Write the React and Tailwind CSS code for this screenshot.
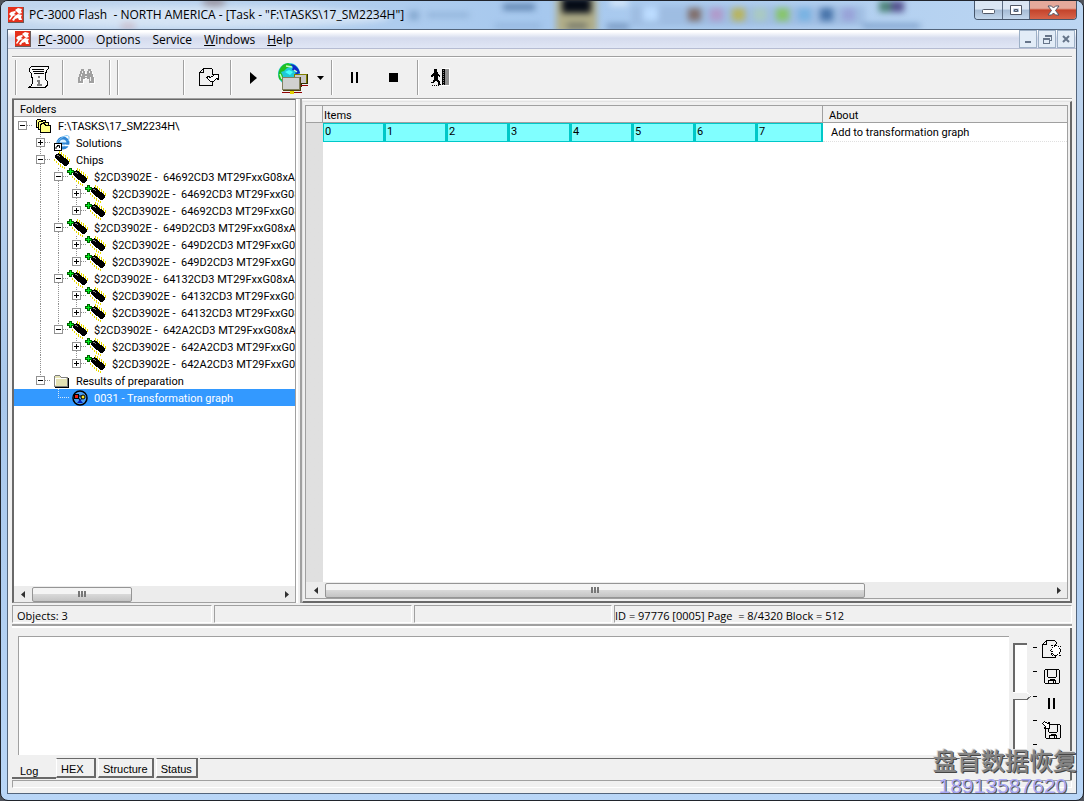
import { useState } from 'react'

const CHIPS = ['64692CD3', '649D2CD3', '64132CD3', '642A2CD3']

// guides: one entry for each indent column, from left to right
const ROWS = [
  { guides: ['minus-root'], icon: 'stack', label: 'F:\\TASKS\\17_SM2234H\\' },
  { guides: ['none', 'plus'], icon: 'ie', label: 'Solutions' },
  { guides: ['none', 'minus'], icon: 'chip', label: 'Chips' },
  ...CHIPS.flatMap((chip, i) => {
    const last = i === CHIPS.length - 1
    const parent = last ? 'none' : 'line'
    const label = `$2CD3902E -  ${chip} MT29FxxG08`
    return [
      { guides: ['none', 'line', last ? 'minus-last' : 'minus'], icon: 'chipAdd', label: `${label}xA` },
      { guides: ['none', 'line', parent, 'plus'], icon: 'chipAdd', label },
      { guides: ['none', 'line', parent, 'plus-last'], icon: 'chipAdd', label },
    ]
  }),
  { guides: ['none', 'minus-last'], icon: 'folder', label: 'Results of preparation' },
  { guides: ['none', 'none', 'corner'], icon: 'graph', label: '0031 - Transformation graph' },
]

const MENU = ['PC-3000', 'Options', 'Service', 'Windows', 'Help']
const UNDERLINED = ['PC-3000', 'Windows', 'Help']
const ITEMS = [0, 1, 2, 3, 4, 5, 6, 7]
const TABS = ['Log', 'HEX', 'Structure', 'Status']

function AppLogo() {
  return (
    <svg width="16" height="16" viewBox="0 0 16 16" className="shrink-0">
      <rect width="16" height="16" fill="#6b5a58" />
      <rect width="15" height="15" fill="#e5301c" />
      <path d="M1 7L3 5L7 4L8 5L6 7L8 8L5 9L2 13L1 12L3 9ZM7 3L10 1L14 2L13 4L14 6L11 7L9 5ZM7 9L10 7L14 8L13 10L14 13H11L10 11L7 12L6 14L4 13Z" fill="#fff" />
    </svg>
  )
}

function Guide({ type }) {
  const [kind, mod] = type.split('-')
  const box = kind === 'plus' || kind === 'minus'
  const drawing = (
    <svg width="18" height="17" viewBox="0 0 18 17" shapeRendering="crispEdges" className="block overflow-visible">
      <g stroke="#909090" strokeDasharray="1 1" fill="none">
        {kind === 'line' && <path d="M8.500 0V17" />}
        {box && mod !== 'root' && <path d="M8.500 0V4" />}
        {box && !mod && <path d="M8.500 13V17" />}
        {box && <path d="M13 8.500H19" />}
        {kind === 'corner' && <path d="M8.500 0V8.500H19" stroke="#d8e8f8" />}
      </g>
      {box && <rect x="4.500" y="4.500" width="8" height="8" fill="#fff" stroke="#919191" />}
      {box && <path d="M6 8.500H11" stroke="#000" />}
      {kind === 'plus' && <path d="M8.500 6V11" stroke="#000" />}
    </svg>
  )
  if (box) {
    return <button type="button" aria-label={kind === 'plus' ? 'Expand' : 'Collapse'} className="shrink-0">{drawing}</button>
  }
  return <span className="shrink-0">{drawing}</span>
}

function Chip() {
  return (
    <g shapeRendering="crispEdges">
      <path d="M0 7h1v2H0ZM2 9h1v2H2ZM4 11h1v2H4ZM6 12h1v3H6ZM8 14h1v2H8ZM10 15h1v2h-1ZM5 -1h1v3H5ZM7 0h1v3H7ZM9 2h1v3H9ZM11 3h1v3h-1ZM13 5h1v3h-1ZM15 7h1v3h-1Z" fill="#e8dc00" />
      <path d="M1 3h1v-1h2v-1h1v1h2v1h1v1h1v1h1v1h2v1h1v1h1v1h1v3h-1v1h-1v1h-3v-1H9v-1H8v-1H6v-1H5V9H4V8H3V7H2V6H1Z" fill="#000" />
      <path d="M3 3h2v1H3ZM5 4h1v1H5Z" fill="#808080" />
    </g>
  )
}

function TreeIcon({ name }) {
  return (
    <svg width="16" height="16" viewBox="0 0 16 16" className="block shrink-0 overflow-visible">
      {name === 'stack' && (
        <g fill="#ffff80" stroke="#000" shapeRendering="crispEdges">
          <path d="M.5 9.5V2.5L1.5 1.5H4.5L5.5 2.5H9.5V9.5Z" />
          <path d="M2.5 11.5V4.5L3.5 3.5H6.5L7.5 4.5H12.5V11.5Z" />
          <path d="M4.5 14.5V7.5L5.5 5.5H8.5L9.5 7.5H14.5V14.5Z" />
        </g>
      )}
      {name === 'ie' && (
        <g>
          <circle cx="9" cy="8" r="5" fill="#d8f0ff" stroke="#2f86d6" strokeWidth="3" />
          <path d="M5 8.500H14" stroke="#2f86d6" strokeWidth="2" />
          <path d="M11 10.500H15" stroke="#fff" strokeWidth="1.500" />
          <path d="M2 10C4 4 12 -1 14.500 1C15.500 2 15 4 14 6" stroke="#7cc4f4" fill="none" />
          <rect x=".5" y="8.500" width="7" height="7" fill="#fff" stroke="#000" />
          <path d="M2 14V12L4.500 11M3 10.500H5.500V13" stroke="#000" fill="none" />
        </g>
      )}
      {name === 'chip' && <Chip />}
      {name === 'chipAdd' && (
        <g>
          <Chip />
          <path d="M-5 2.500H2M-1.500 -1V6" stroke="#006000" strokeWidth="3" />
          <path d="M-4 2.500H1M-1.500 0V5" stroke="#00f020" strokeWidth="1" />
        </g>
      )}
      {name === 'folder' && (
        <g shapeRendering="crispEdges">
          <path d="M1 14.500H14.500V5" stroke="#000" fill="none" />
          <path d="M.5 13.500V3.500L1.500 2.500H5.500L7.500 4.500H13.500V13.500Z" fill="#e4e2b4" stroke="#808080" />
          <path d="M1.500 12V5.500H12" stroke="#fff" fill="none" />
        </g>
      )}
      {name === 'graph' && (
        <g>
          <circle cx="8" cy="8" r="7" fill="#4a9df0" stroke="#000" strokeWidth="1.500" />
          <path d="M6 6H11L8 11Z" fill="none" stroke="#000" />
          <rect x="2.500" y="4.500" width="4" height="4" fill="#f02010" stroke="#000" />
          <circle cx="11" cy="7" r="2" fill="#ffe820" stroke="#000" />
          <path d="M5 13L8 9.500L11 13Z" fill="#0020c0" />
        </g>
      )}
    </svg>
  )
}

function FolderTree() {
  const [selected, setSelected] = useState(ROWS.length - 1)

  return (
    <section className="flex w-[284px] shrink-0 flex-col border border-l-2 border-[#696969] border-r-[#a0a0a0] border-b-[#a0a0a0] bg-white text-[11px]">
      <h2 className="h-[17px] border-b border-[#a0a0a0] bg-[#f0f0f0] pl-1.5 leading-5">Folders</h2>
      <ul className="flex-1 overflow-hidden">
        {ROWS.map((row, i) => (
          <li key={i} className={`flex h-[17px] items-center ${i === selected ? 'bg-[#3399ff] text-white' : ''}`}>
            {row.guides.map((g, n) => <Guide key={n} type={g} />)}
            <button type="button" onClick={() => setSelected(i)} className="ml-1 flex h-[17px] items-center gap-1.5 whitespace-pre">
              <TreeIcon name={row.icon} />
              <span className="pt-0.5 leading-4">{row.label}</span>
            </button>
          </li>
        ))}
      </ul>
      <ScrollBar left="w-[18px]" thumb="w-[100px]" />
    </section>
  )
}

function ScrollBar({ left, thumb }) {
  return (
    <div className="flex h-4 shrink-0 items-center bg-[#ececec]">
      <button type="button" aria-label="Scroll left" className={`flex ${left} justify-center`}>
        <svg width="4" height="7" viewBox="0 0 4 7"><path d="M4 0V7L0 3.500Z" fill="#303030" /></svg>
      </button>
      <div className={`${thumb} flex h-[15px] items-center justify-center gap-px rounded-xs border border-[#959595] bg-linear-to-b from-[#f4f4f4] from-45% via-[#d8d8d8] via-50% to-[#c4c4c4]`}>
        <span className="h-1.5 w-0.5 bg-[#777]" />
        <span className="h-1.5 w-0.5 bg-[#777]" />
        <span className="h-1.5 w-0.5 bg-[#777]" />
      </div>
      <button type="button" aria-label="Scroll right" className="ml-auto flex w-4 justify-center">
        <svg width="4" height="7" viewBox="0 0 4 7"><path d="M0 0V7L4 3.500Z" fill="#303030" /></svg>
      </button>
    </div>
  )
}

function ItemGrid() {
  return (
    <section className="mt-0.5 flex min-w-0 flex-1 flex-col border-r-2 border-b-2 border-l border-t border-[#696969] border-l-[#e3e3e3] border-t-[#e3e3e3] bg-[#f0f0f0] px-0.5 pt-[3px] pb-0.5">
      <div className="flex flex-1 flex-col border border-[#a0a0a0] bg-white text-[11px]">
        <div className="flex flex-1 flex-col bg-linear-to-r from-[#e0e0e0] from-[17px] to-white to-[17px]">
          <table className="w-full table-fixed border-separate border-spacing-0">
            <colgroup>
              <col className="w-[17px]" />
              {ITEMS.map(n => <col key={n} className={n === 7 ? 'w-[66px]' : 'w-[62px]'} />)}
              <col />
            </colgroup>
            <thead>
              <tr className="bg-[#f0f0f0] text-left leading-4">
                <th className="border-r border-b border-[#a0a0a0] p-0"></th>
                <th colSpan="8" className="border-r border-b border-[#a0a0a0] p-0 pl-px font-normal">
                  <div className="h-4 leading-5">Items</div>
                </th>
                <th className="border-b border-[#a0a0a0] p-0 pl-1.5 font-normal">
                  <div className="h-4 leading-5">About</div>
                </th>
              </tr>
            </thead>
            <tbody>
              <tr className="h-[19px] leading-4">
                <td className="bg-[#e0e0e0] p-0"></td>
                {ITEMS.map(n => (
                  <td key={n} className="p-0 align-top">
                    <div className="h-[19px] border border-r-2 border-[#00c8c8] bg-[#80ffff] pl-px">{n}</div>
                  </td>
                ))}
                <td className="border-b border-dotted border-[#e0e0e0] bg-white p-0 pt-0.5 pl-2">Add to transformation graph</td>
              </tr>
            </tbody>
          </table>
        </div>
        <ScrollBar left="w-[19px]" thumb="w-[540px]" />
      </div>
    </section>
  )
}

function Separator({ className }) {
  return <span className={`h-[35px] w-0.5 shrink-0 border-l border-[#a0a0a0] bg-white ${className}`} />
}

function Toolbar() {
  return (
    <div className="mx-1 mt-[7px] flex h-[43px] items-center border-y border-[#a0a0a0] pl-[3px] shadow-[inset_0_1px_#fff,0_1px_#fff]">
      <Separator className="" />
      <button type="button" aria-label="Script" className="flex w-[45px] justify-center pr-0.5">
        <svg width="22" height="23" viewBox="0 0 22 23" shapeRendering="crispEdges" fill="none" stroke="#000">
          <path d="M20.500 .5H3.500L1.500 2.500V5.500L3.500 7.500V10.500L4.500 12.500V16.500L3.500 19.500L.5 21.500H16.500L18.500 20.500L19.500 18.500V15.500L17.500 13.500V8.500L18.500 4.500L20.500 2.500Z" fill="#f8f8f8" />
          <path d="M4 3.500H16M5 5.500H16M6 7.500H16" />
          <path d="M10 11H12M9 14.500H11M9 18.500H14" stroke="#808080" strokeWidth="2" />
          <path d="M11 14V19" stroke="#808080" strokeWidth="2" />
        </svg>
      </button>
      <Separator className="" />
      <button type="button" aria-label="Find" disabled className="flex w-[45px] justify-center">
        <svg width="17" height="17" viewBox="0 0 17 17" shapeRendering="crispEdges">
          <path d="M3 0h3v2h1v3h2V2h1V0h3v2h1v3h1v3h1v6h-5v-4H9V9H7v1H5v4H0V8h1V5h1V2h1Z" fill="#fff" transform="translate(1 1)" />
          <path d="M3 0h3v2h1v3h2V2h1V0h3v2h1v3h1v3h1v6h-5v-4H9V9H7v1H5v4H0V8h1V5h1V2h1Z" fill="#a0a0a0" />
          <path d="M4.500 2v2M11.500 2v2M2.500 8v4M12.500 8v4M3.500 5v2M7 7.500h2" stroke="#f0f0f0" />
        </svg>
      </button>
      <Separator className="" />
      <Separator className="ml-[6px]" />
      <Separator className="ml-[64px]" />
      <button type="button" aria-label="Export" className="flex w-[45px] justify-center pl-1">
        <svg width="21" height="19" viewBox="0 0 21 19" shapeRendering="crispEdges" fill="none" stroke="#000">
          <path d="M13.500 13V17.500H.5V4.500L4.500 .5H12.500L13.500 1.500V6M4.500 .5V4.500H.5" />
          <path d="M11.500 13.500L7.500 9.500L9.500 8.500L11.500 9.500L14.500 7.500L13.500 6.500H19.500V11.500L17.500 10.500L14.500 13.500Z" fill="#fff" />
        </svg>
      </button>
      <Separator className="" />
      <button type="button" aria-label="Start" className="flex w-[43px] justify-center">
        <svg width="7" height="12" viewBox="0 0 7 12"><path d="M0 0L7 6L0 12Z" /></svg>
      </button>
      <button type="button" aria-label="Network" className="flex w-9 justify-center">
        <svg width="32" height="32" viewBox="0 0 32 32">
          <circle cx="12" cy="12" r="11" fill="#20c8d8" />
          <path d="M2 17C0 9 4 2 11 1L16 4L10 6L7 9L4 10L6 14L5 19Z" fill="#20c020" />
          <path d="M8 10L12 8L16 10L13 13Z" fill="#40ffff" />
          <path d="M13 2C18 2 22 6 23 11L18 13L19 9L15 8L16 5Z" fill="#1028c8" />
          <path d="M9 4L15 5M3 12L5 17M17 8L20 10" stroke="#c0ffc0" strokeWidth="1.500" />
          <g shapeRendering="crispEdges">
            <rect x="17.500" y="12.500" width="12" height="9" fill="#c8c8c8" stroke="#808000" />
            <path d="M17 21.500H30V12M24 22V24.500" stroke="#303000" fill="none" />
            <path d="M24 23.500H31" stroke="#900000" strokeWidth="1" />
            <rect x="5.500" y="15.500" width="17" height="12" fill="#d0d0d0" stroke="#808060" />
            <path d="M6 28.500H23.500V15M14.500 29V31" stroke="#504010" fill="none" />
            <path d="M5 30.500H25" stroke="#900000" strokeWidth="1" />
            <rect x="13" y="29" width="4" height="3" fill="#e0d000" />
          </g>
        </svg>
      </button>
      <button type="button" aria-label="Network options" className="flex w-5 justify-center pr-0.5">
        <svg width="7" height="4" viewBox="0 0 7 4"><path d="M0 0H7L3.500 4Z" /></svg>
      </button>
      <Separator className="" />
      <button type="button" aria-label="Pause" className="flex w-[42px] justify-center pl-0.5">
        <PauseIcon />
      </button>
      <button type="button" aria-label="Stop" className="flex w-[42px] justify-center pr-1.5">
        <svg width="9" height="9" viewBox="0 0 9 9"><rect width="9" height="9" /></svg>
      </button>
      <Separator className="" />
      <button type="button" aria-label="Exit" className="flex w-[40px] justify-center pl-0.5">
        <svg width="19" height="19" viewBox="0 0 19 19" shapeRendering="crispEdges">
          <path d="M3 1h3v3h1v2l2 2v1H8L7 8v3l2 3v2h1v1H7v-2l-2-3-2 3H0v-1h2l1-4V7L2 9H0V8l2-3h1Z" />
          <path d="M1 17.500H9" stroke="#000" strokeDasharray="1 1" />
          <rect x="11" y="0" width="8" height="18" fill="#fff" />
          <rect x="11" y="1" width="3" height="16" />
          <rect x="14" y="1" width="4" height="16" fill="#909090" />
          <path d="M12.500 2V17" stroke="#888" strokeDasharray="1 1" />
        </svg>
      </button>
    </div>
  )
}

function PauseIcon() {
  return <svg width="8" height="11" viewBox="0 0 8 11"><path d="M0 0h2v11H0ZM5 0h2v11H5Z" /></svg>
}

function TitleBar() {
  return (
    <header className="relative flex h-7 shrink-0 items-center overflow-hidden bg-linear-to-r from-[#c3d7ee] via-[#a6c8ee] to-[#bcd6f2] pl-[7px]">
      <svg width="1084" height="28" viewBox="0 0 1084 28" aria-hidden="true" className="absolute top-0 left-0">
        <g style={{ filter: 'blur(3px)' }}>
          <ellipse cx="200" cy="16" rx="190" ry="11" fill="#dce9f6" opacity=".8" />
          <ellipse cx="213" cy="1" rx="12" ry="5" fill="#8b7f86" opacity=".7" />
          <rect x="120" y="22" width="14" height="6" fill="#c9a8b0" opacity=".6" />
          <rect x="408" y="10" width="10" height="9" fill="#85a8cf" />
          <rect x="426" y="12" width="42" height="4" fill="#8caed4" />
          <rect x="502" y="3" width="32" height="6" fill="#5b80ac" />
          <rect x="494" y="23" width="46" height="4" fill="#8fb1d8" />
          <rect x="555" y="-4" width="41" height="36" fill="#b0ad88" />
          <rect x="561" y="-4" width="29" height="16" fill="#050b16" />
          <rect x="566" y="22" width="20" height="6" fill="#77796a" />
          <rect x="606" y="23" width="22" height="5" fill="#6f8fb8" />
          <rect x="609" y="-2" width="18" height="7" fill="#d6e8fa" />
          <rect x="630" y="5" width="234" height="20" fill="#9bb9de" opacity=".8" />
          <rect x="642" y="6" width="15" height="14" fill="#bcdcff" />
          <rect x="687" y="7" width="13" height="13" fill="#806f6c" />
          <rect x="709" y="7" width="13" height="13" fill="#b09acb" />
          <rect x="731" y="7" width="13" height="13" fill="#b8b45e" />
          <rect x="752" y="7" width="14" height="13" fill="#a9c9c2" />
          <rect x="775" y="7" width="13" height="13" fill="#86c56a" />
          <rect x="797" y="7" width="13" height="13" fill="#79b2e2" />
          <rect x="819" y="7" width="13" height="13" fill="#4874aa" />
          <rect x="841" y="7" width="13" height="13" fill="#98a2d8" />
          <rect x="878" y="0" width="12" height="11" fill="#4c8377" />
          <rect x="890" y="0" width="13" height="11" fill="#54518e" />
          <rect x="862" y="23" width="57" height="4" fill="#7195c2" />
        </g>
      </svg>
      <div className="relative flex min-w-0 items-center gap-[5px]">
        <AppLogo />
        <h1 className="whitespace-pre text-[12px] leading-4 font-normal">{'PC-3000 Flash  - NORTH AMERICA - [Task - "F:\\TASKS\\17_SM2234H"]'}</h1>
      </div>
      <div className="relative mr-1.5 ml-auto flex h-[19px] shrink-0 self-start overflow-hidden rounded-b border border-t-0 border-[#46566b]">
        <button type="button" aria-label="Minimize" className="flex w-7 items-center justify-center border-r border-[#5c6c82] bg-linear-to-b from-[#dae6f3] from-45% via-[#a5bbd4] via-50% to-[#c3d7ec] pt-1">
          <svg width="13" height="6" viewBox="0 0 13 6"><rect x=".5" y=".5" width="12" height="4" rx="1" fill="#fff" stroke="#515866" /></svg>
        </button>
        <button type="button" aria-label="Maximize" className="flex w-[27px] items-center justify-center border-r border-[#5c6c82] bg-linear-to-b from-[#dae6f3] from-45% via-[#a5bbd4] via-50% to-[#c3d7ec]">
          <svg width="13" height="11" viewBox="0 0 13 11" fill="none"><rect x="2" y="2" width="8" height="6" stroke="#fff" strokeWidth="2" /><path d="M.5 .5H11.500V9.500H.5ZM4.500 4.500H7.500V6.500H4.500Z" stroke="#515866" /></svg>
        </button>
        <button type="button" aria-label="Close" className="flex w-[46px] items-center justify-center bg-linear-to-b from-[#e5a99b] from-40% via-[#c4432b] via-50% to-[#d7644a]">
          <svg width="13" height="11" viewBox="0 0 13 11"><path d="M1 1H4.500L6.500 3L8.500 1H12L8.500 5.500L12 10H8.500L6.500 8L4.500 10H1L4.500 5.500Z" fill="#fff" stroke="#535666" /></svg>
        </button>
      </div>
    </header>
  )
}

function MenuBar() {
  const btn = 'flex h-[18px] w-[18px] items-center justify-center border border-[#9db0c6] bg-[#e2ecf7]'
  return (
    <nav className="flex h-[19px] shrink-0 items-center border-b border-[#b6bcd2] bg-linear-to-b from-white from-10% via-[#d5dbed] via-45% to-[#e0e6f5] pl-[7px] text-[12px]">
      <AppLogo />
      <ul className="ml-[7px] flex gap-3 pt-0.5 leading-4">
        {MENU.map(item => (
          <li key={item}>
            <button type="button">
              {UNDERLINED.includes(item) ? <><u>{item[0]}</u>{item.slice(1)}</> : item}
            </button>
          </li>
        ))}
      </ul>
      <div className="mr-px ml-auto flex gap-px">
        <button type="button" aria-label="Minimize document" className={btn}>
          <svg width="8" height="8" viewBox="0 0 8 8"><path d="M1 7H7" stroke="#66758a" strokeWidth="2" /></svg>
        </button>
        <button type="button" aria-label="Restore document" className={btn}>
          <svg width="9" height="9" viewBox="0 0 9 9" fill="none" stroke="#66758a" shapeRendering="crispEdges"><path d="M2.500 2V.5H8.500V5.500H7M2 1.500H9M.5 3.500H6.500V8.500H.5ZM0 4.500H7" /></svg>
        </button>
        <button type="button" aria-label="Close document" className={btn}>
          <svg width="8" height="8" viewBox="0 0 8 8"><path d="M1 1L7 7M7 1L1 7" stroke="#66758a" strokeWidth="2" /></svg>
        </button>
      </div>
    </nav>
  )
}

function StatusBar() {
  const panel = 'border border-[#a0a0a0] border-r-white border-b-white whitespace-pre'
  return (
    <div className="mx-1 mt-0.5 flex h-[18px] shrink-0 gap-0.5 text-[11px] leading-5">
      <div className={`${panel} w-[200px] pl-1`}>Objects: 3</div>
      <div className={`${panel} w-[198px]`} />
      <div className={`${panel} w-[198px]`} />
      <div className={`${panel} flex-1`}>{'ID = 97776 [0005] Page  = 8/4320 Block = 512'}</div>
    </div>
  )
}

function Floppy({ arrow }) {
  return (
    <svg width="20" height="20" viewBox="0 0 20 20" shapeRendering="crispEdges" fill="none" stroke="#000">
      <g transform={arrow ? 'translate(3 4)' : 'translate(2 3)'}>
        <path d="M1.500 .5H14.500L15.500 1.500V13.500L14.500 14.500H1.500L.5 13.500V1.500Z" fill="#f0f0f0" />
        <path d="M3.500 1V7.500L4.500 8.500H11.500L12.500 7.500V1M4.500 14V11.500H11.500V14M9.500 12V14" />
        <path d="M6 10.500H11" />
      </g>
      {arrow && <path d="M.5 3.500L2.500 1.500L5.500 3.500L7.500 2.500V8.500H2.500L3.500 6.500Z" fill="#fff" />}
    </svg>
  )
}

function LogPanel() {
  const [tab, setTab] = useState('Log')
  const [level, setLevel] = useState(50)

  return (
    <div className="mx-1 mt-px shrink-0 border-t-2 border-[#a0a0a0] bg-white pt-0.5">
      <div className="border-r-2 border-[#696969] bg-[#f0f0f0] pt-2">
        <div className="flex pl-1.5">
          <textarea aria-label="Log output" readOnly className="block h-[119px] min-w-0 flex-1 resize-none border-t border-l border-[#a0a0a0] bg-white outline-none" />
          <div className="relative mt-[5px] ml-1 h-[110px] w-6">
            <svg width="24" height="110" viewBox="0 0 24 110" shapeRendering="crispEdges" className="block">
              <rect x="1" y="2" width="13" height="106" fill="#fff" />
              <path d="M1 108V3H14" stroke="#696969" strokeWidth="2" fill="none" />
              <path d="M20 6.500H24M20 30.500H24M20 55.500H24M20 79.500H24M20 103.500H24" stroke="#000" />
              <path d="M0 51H14L18 55L14 59H0Z" fill="#f0f0f0" />
              <path d="M0 51.500H14L18 55" stroke="#fff" fill="none" />
              <path d="M0 58.500H14L18 55" stroke="#696969" fill="none" />
            </svg>
            <input
              type="range"
              aria-label="Log level"
              value={level}
              onChange={e => setLevel(Number(e.target.value))}
              className="absolute inset-0 h-full w-full opacity-0 [writing-mode:vertical-lr]"
            />
          </div>
          <div className="flex w-[33px] flex-col items-center gap-[7px] pt-[3px] pr-1">
            <button type="button" aria-label="New log">
              <svg width="20" height="20" viewBox="0 0 20 20" shapeRendering="crispEdges" fill="none" stroke="#000">
                <path d="M13.500 15V18.500H.5V5.500L4.500 1.500H12.500L14.500 3.500V5M4.500 1.500V5.500H.5" />
                <path d="M13.500 5.500L15.500 7.500L18.500 6.500L17.500 9.500L19.500 11.500L17.500 12.500L18.500 16.500L15.500 15.500L13.500 17.500L12.500 15.500L9.500 16.500L10.500 12.500L8.500 11.500L10.500 9.500L9.500 6.500L12.500 7.500Z" fill="#fff" strokeDasharray="2 1" />
              </svg>
            </button>
            <button type="button" aria-label="Save log"><Floppy /></button>
            <button type="button" aria-label="Pause log" className="flex h-5 items-center"><PauseIcon /></button>
            <button type="button" aria-label="Save log as"><Floppy arrow /></button>
          </div>
        </div>
        <div className="flex h-[25px] items-start font-['Liberation_Sans',sans-serif] text-[11px]">
          {TABS.map(t => (
            <button
              key={t}
              type="button"
              onClick={() => setTab(t)}
              className={t === tab
                ? 'h-6 w-11 border-b-2 border-[#696969] pl-2 pt-2 text-left'
                : 'mt-[3px] mr-0.5 h-5 min-w-10 border-t border-r-2 border-b-2 border-l border-[#696969] border-l-white px-1 pt-0.5 text-left'}
            >
              {t}
            </button>
          ))}
          <span className="mt-[3px] flex-1 border-t border-[#696969]" />
        </div>
      </div>
      <div className="bg-[#f0f0f0] pb-[5px]">
        <div className="h-2 border border-[#a0a0a0] border-r-white border-b-white" />
      </div>
    </div>
  )
}

export default function App() {
  return (
    <div className="h-screen bg-[#50545c] font-['Open_Sans',sans-serif] text-black">
      <div className="relative flex h-full flex-col overflow-hidden rounded-lg border border-[#20242c] bg-linear-to-b from-[#c3d7ee] via-[#a9c8ec] to-[#b9d6f7]">
        <TitleBar />
        <main className="mx-1.5 mb-1.5 flex min-h-0 flex-1 flex-col border border-[#53657c] bg-[#f0f0f0]">
          <MenuBar />
          <Toolbar />
          <div className="mx-1 flex min-h-0 flex-1 font-['Roboto',sans-serif]">
            <FolderTree />
            <div className="w-1.5 shrink-0 border-r-2 border-[#a0a0a0] border-l-2 border-l-white bg-[#f0f0f0]" />
            <ItemGrid />
          </div>
          <StatusBar />
          <LogPanel />
        </main>
        <div className="pointer-events-none absolute right-1.5 bottom-1 text-right font-['Liberation_Sans','Noto_Sans_CJK_SC',sans-serif]">
          <p className="text-2xl leading-7 font-medium text-[#858585] [text-shadow:1px_1px_#444,-1px_-1px_#ddd]">盘首数据恢复</p>
          <p className="pr-2.5 text-[21px] leading-5 text-[#a8a8f4] [text-shadow:1px_1px_#555]">18913587620</p>
        </div>
      </div>
    </div>
  )
}
